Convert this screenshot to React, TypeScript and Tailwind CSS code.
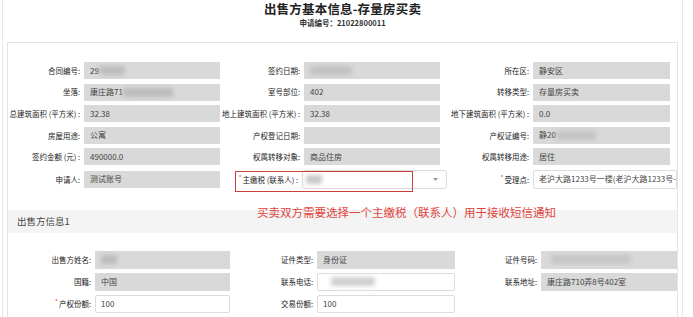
import React from "react";

const Blur = ({ w, c = "bg-[#b5b5b5]" }: { w: string; c?: string }) => (
  <span className={`inline-block ${w} h-[9px] ${c} blur-[2px] rounded-[2px]`} />
);

function Label({ w, children, star }: { w: string; children: React.ReactNode; star?: boolean }) {
  return (
    <div className={`${w} shrink-0 flex justify-end pr-[4px] whitespace-nowrap text-[7.5px] leading-none text-[#222]`}>
      {star && <span className="text-[#e0403a] text-[6px] -mt-[1px] mr-[1px]">*</span>}
      <span>{children}</span>
    </div>
  );
}

function Gray({ w, children }: { w: string; children?: React.ReactNode }) {
  return (
    <div className={`${w} shrink-0 h-full bg-[#d9d9d9] flex items-center pl-[6px] text-[8px] leading-none text-[#444] whitespace-nowrap overflow-hidden`}>
      {children}
    </div>
  );
}

function White({ w, children }: { w: string; children?: React.ReactNode }) {
  return (
    <div className={`${w} shrink-0 h-full bg-white border border-[#dcdcdc] rounded-[2px] flex items-center pl-[5px] text-[8px] leading-none text-[#444] whitespace-nowrap overflow-hidden`}>
      {children}
    </div>
  );
}

export default function App() {
  return (
    <div className="relative w-[693px] h-[317px] overflow-hidden bg-white font-['Noto_Sans_CJK_SC','Noto_Sans',sans-serif]">
      <div className="ml-[2px] w-[681px] h-[317px] border-x border-[#e8e8e8]">
        {/* title */}
        <div className="h-[42px] flex flex-col items-center pt-[1px]">
          <div className="text-[12.5px] leading-[15px] font-bold text-[#222] tracking-[0.2px]">出售方基本信息-存量房买卖</div>
          <div className="mt-[2px] text-[7.5px] leading-[9px] font-bold text-[#333]">申请编号：21022800011</div>
        </div>

        {/* card */}
        <div className="ml-[4px] w-[671px] h-[300px] border border-[#e4e4e4]">
          <div className="pt-[19px] flex flex-col gap-y-[4.6px]">
            <div className="flex h-[17px] items-center">
              <Label w="w-[76px]">合同编号:</Label>
              <Gray w="w-[136px]">29<Blur w="w-[26px]" c="bg-[#bdbdbd]" /></Gray>
              <Label w="w-[84px]">签约日期:</Label>
              <Gray w="w-[136px]"><Blur w="w-[42px]" c="bg-[#c2c2c2]" /></Gray>
              <Label w="w-[93px]">所在区:</Label>
              <Gray w="w-[137px]">静安区</Gray>
            </div>
            <div className="flex h-[17px] items-center">
              <Label w="w-[76px]">坐落:</Label>
              <Gray w="w-[136px]">康庄路71<Blur w="w-[50px]" c="bg-[#bcbcbc]" /></Gray>
              <Label w="w-[84px]">室号部位:</Label>
              <Gray w="w-[136px]">402</Gray>
              <Label w="w-[93px]">转移类型:</Label>
              <Gray w="w-[137px]">存量房买卖</Gray>
            </div>
            <div className="flex h-[17px] items-center">
              <Label w="w-[76px]">总建筑面积 (平方米) :</Label>
              <Gray w="w-[136px]">32.38</Gray>
              <Label w="w-[84px]">地上建筑面积 (平方米) :</Label>
              <Gray w="w-[136px]">32.38</Gray>
              <Label w="w-[93px]">地下建筑面积 (平方米) :</Label>
              <Gray w="w-[137px]">0.0</Gray>
            </div>
            <div className="flex h-[17px] items-center">
              <Label w="w-[76px]">房屋用途:</Label>
              <Gray w="w-[136px]">公寓</Gray>
              <Label w="w-[84px]">产权登记日期:</Label>
              <Gray w="w-[136px]" />
              <Label w="w-[93px]">产权证编号:</Label>
              <Gray w="w-[137px]">静20<Blur w="w-[40px]" c="bg-[#c4c4c4]" /></Gray>
            </div>
            <div className="flex h-[17px] items-center">
              <Label w="w-[76px]">签约金额 (元) :</Label>
              <Gray w="w-[136px]">490000.0</Gray>
              <Label w="w-[84px]">权属转移对象:</Label>
              <Gray w="w-[136px]">商品住房</Gray>
              <Label w="w-[93px]">权属转移用途:</Label>
              <Gray w="w-[137px]">居住</Gray>
            </div>
            <div className="flex h-[19px] items-center">
              <Label w="w-[76px]">申请人:</Label>
              <div className="h-[17px]"><Gray w="w-[136px]">测试账号</Gray></div>
              <Label w="w-[82px]" star>主缴税 (联系人) :</Label>
              <div className="w-[145px] shrink-0 h-[19px] bg-white border border-[#dcdcdc] rounded-[3px] flex items-center pl-[3px] pr-[8px]">
                <Blur w="w-[16px]" c="bg-[#c8c8c8]" />
                <span className="flex-1" />
                <svg width="5" height="3" viewBox="0 0 5 3"><path d="M0 0 L5 0 L2.5 3 Z" fill="#9a9a9a" /></svg>
              </div>
              <Label w="w-[86px]" star>受理点:</Label>
              <div className="h-[19px]"><White w="w-[144px]">老沪大路1233号一楼(老沪大路1233号-</White></div>
            </div>
          </div>

          {/* section 2 header */}
          <div className="mt-[21px] h-[23px] bg-[#f4f4f4] flex items-center pl-[9px] text-[9.5px] text-[#444]">
            出售方信息1
          </div>

          <div className="pt-[18px] flex flex-col gap-y-[4px]">
            <div className="flex h-[18px] items-center">
              <Label w="w-[87px]">出售方姓名:</Label>
              <Gray w="w-[135px]"><Blur w="w-[16px]" c="bg-[#bcbcbc]" /></Gray>
              <Label w="w-[87px]">证件类型:</Label>
              <Gray w="w-[138px]">身份证</Gray>
              <Label w="w-[86px]">证件号码:</Label>
              <Gray w="w-[136px]"><span className="pl-[4px]" /><Blur w="w-[80px]" c="bg-[#c6c6c6]" /></Gray>
            </div>
            <div className="flex h-[18px] items-center">
              <Label w="w-[87px]">国籍:</Label>
              <Gray w="w-[135px]">中国</Gray>
              <Label w="w-[87px]">联系电话:</Label>
              <White w="w-[138px]"><span className="pl-[8px]" /><Blur w="w-[44px]" c="bg-[#cfcfcf]" /></White>
              <Label w="w-[86px]">联系地址:</Label>
              <Gray w="w-[136px]">康庄路710弄8号402室</Gray>
            </div>
            <div className="flex h-[18px] items-center">
              <Label w="w-[87px]" star>产权份额:</Label>
              <White w="w-[135px]">100</White>
              <Label w="w-[87px]">交易份额:</Label>
              <White w="w-[138px]">100</White>
            </div>
          </div>
        </div>
      </div>

      {/* annotations */}
      <div className="absolute left-[235px] top-[171px] w-[178px] h-[21px] border-[1.5px] border-[#cf3f3a]" />
      <div className="absolute left-[257px] top-[204px] text-[11.5px] leading-[16px] text-[#e0453d] whitespace-nowrap">
        买卖双方需要选择一个主缴税（联系人）用于接收短信通知
      </div>
    </div>
  );
}
